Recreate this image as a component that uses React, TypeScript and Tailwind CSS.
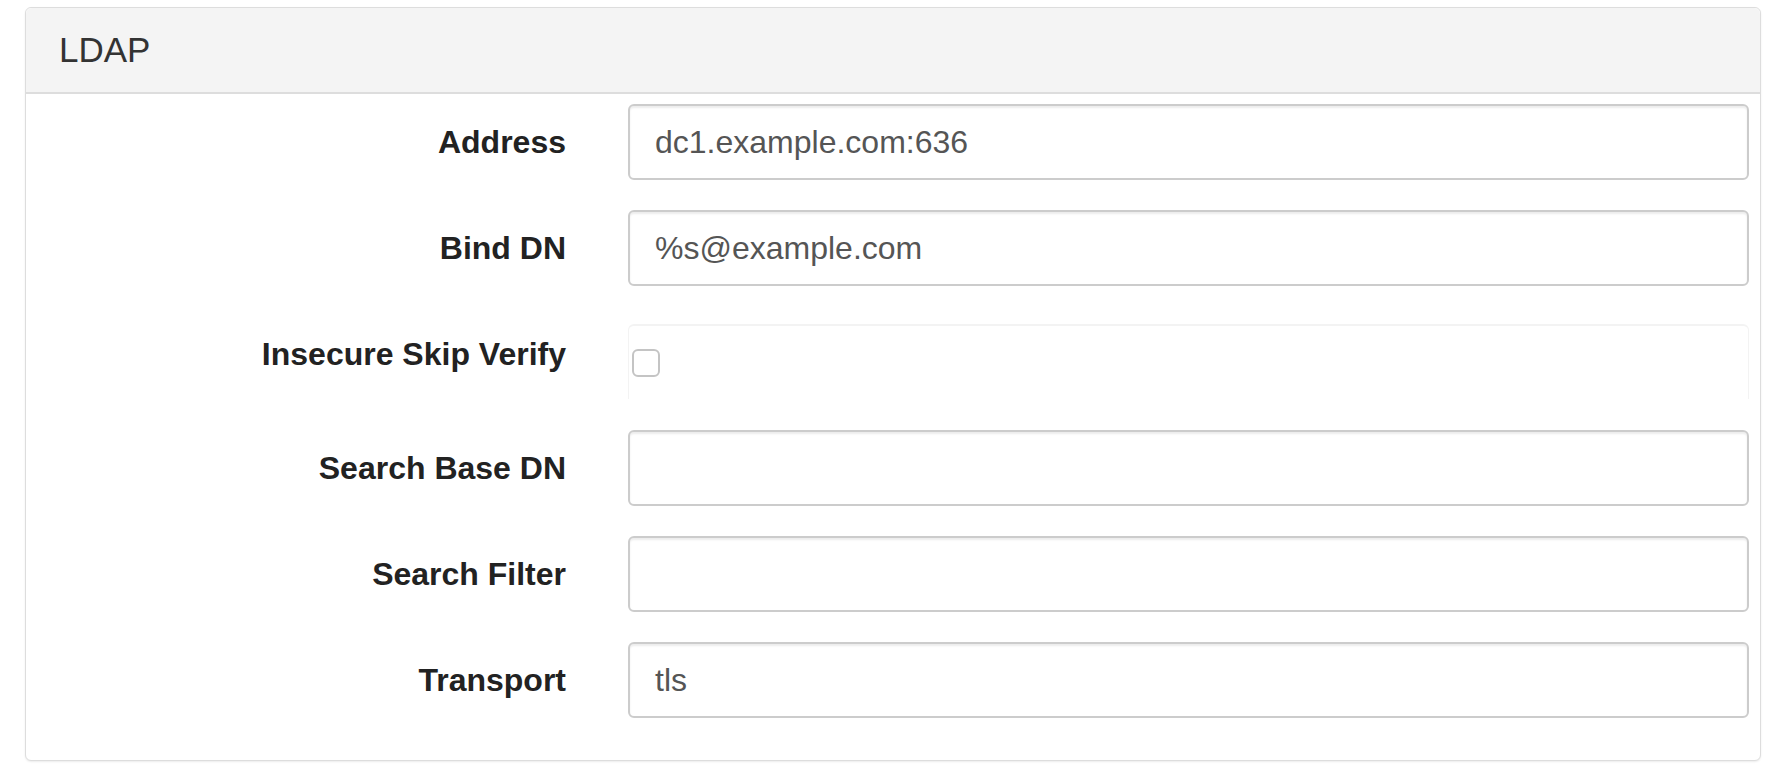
const fields = [
  { label: "Address", value: "dc1.example.com:636" },
  { label: "Bind DN", value: "%s@example.com" },
  { label: "Insecure Skip Verify", checkbox: true },
  { label: "Search Base DN", value: "" },
  { label: "Search Filter", value: "" },
  { label: "Transport", value: "tls" },
];

const App = () => {
  return (
    <div className="min-h-screen bg-white pt-[7px] pl-[25px] pr-[26px] font-['Liberation_Sans',Arial,sans-serif]">
      <div className="border border-[#dddddd] rounded-[6px] shadow-[0_1px_2px_rgba(0,0,0,0.08)] bg-white">
        <div className="h-[86px] bg-[#f4f4f4] border-b-2 border-[#dddddd] rounded-t-[6px] flex items-center pl-[33px] text-[35px] text-[#333333]">
          LDAP
        </div>
        <div className="flex flex-col gap-[30px] pt-[10px] pb-[42px] pr-[11px]">
          {fields.map((f) =>
            f.checkbox ? (
              <div key={f.label} className="grid grid-cols-[540px_1fr] gap-x-[62px] h-[84px]">
                <div className="h-[76px] flex items-center justify-end text-[32px] font-bold text-[#222222]">
                  {f.label}
                </div>
                <div className="mt-[8px] h-[75px] border-t-2 border-x border-[#f3f3f3] rounded-t-[6px] flex items-center pl-[3px]">
                  <div className="w-[28px] h-[28px] rounded-[6px] border-2 border-[#c4c4c4] bg-white" />
                </div>
              </div>
            ) : (
              <div key={f.label} className="grid grid-cols-[540px_1fr] gap-x-[62px] h-[76px]">
                <div className="flex items-center justify-end text-[32px] font-bold text-[#222222]">
                  {f.label}
                </div>
                <div className="h-[76px] border-2 border-[#cccccc] rounded-[6px] shadow-[inset_0_2px_2px_rgba(0,0,0,0.075)] flex items-center pl-[25px] text-[32px] text-[#555555]">
                  {f.value}
                </div>
              </div>
            )
          )}
        </div>
      </div>
    </div>
  );
};

export default App;
